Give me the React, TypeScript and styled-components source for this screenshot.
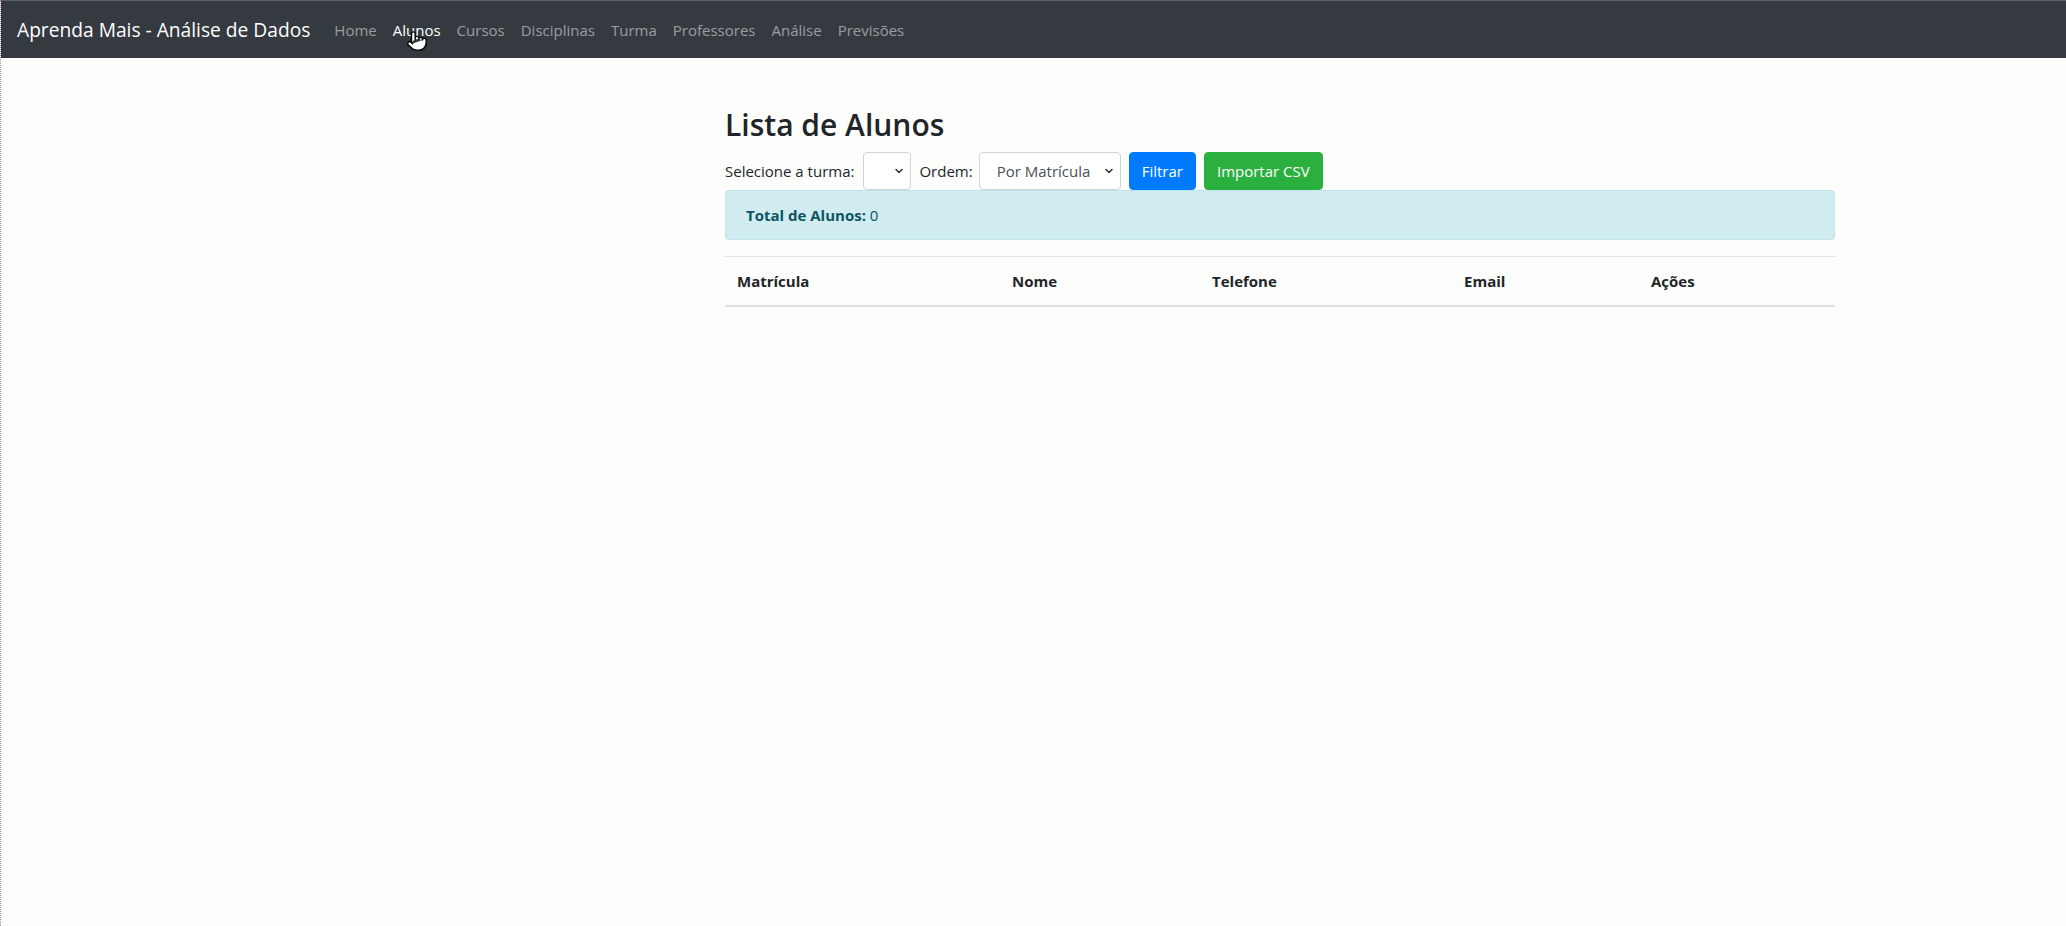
import React from "react";
import styled, { createGlobalStyle } from "styled-components";
import { ChevronDown, Pointer } from "lucide-react";

const GlobalStyle = createGlobalStyle`
  html, body {
    margin: 0;
    padding: 0;
    background: #fdfdfc;
    font-family: "Open Sans", "Noto Sans", sans-serif;
    color: #212529;
  }
  * { box-sizing: border-box; }
`;

const Page = styled.div`
  min-height: 926px;
  background: #fdfdfc;
  border-left: 1px dotted #b98a8a;
`;

const NavBar = styled.nav`
  position: relative;
  display: flex;
  align-items: center;
  height: 58px;
  padding: 0 16px;
  background: #343a40;
  border-top: 1px solid #5b6066;
`;

const Brand = styled.a`
  font-size: 19.2px;
  line-height: 30px;
  color: #fff;
  margin-right: 16px;
  white-space: nowrap;
  text-decoration: none;
`;

const NavList = styled.ul`
  display: flex;
  list-style: none;
  margin: 0;
  padding: 0;
`;

const NavLink = styled.a<{ $active?: boolean }>`
  display: block;
  padding: 8px 8px;
  font-size: 15px;
  line-height: 24px;
  color: ${(p) => (p.$active ? "#ffffff" : "rgba(255,255,255,0.5)")};
  text-decoration: none;
`;

const Cursor = styled.span`
  position: absolute;
  left: 405px;
  top: 29px;
  display: flex;
  pointer-events: none;
`;

const Container = styled.main`
  width: 1140px;
  margin: 48px 0 0 709px;
  padding: 0 15px;
`;

const Title = styled.h2`
  margin: 0 0 8px;
  font-size: 30px;
  font-weight: 600;
  line-height: 38px;
  color: #212529;
`;

const FilterRow = styled.form`
  display: flex;
  align-items: center;
  height: 38px;
`;

const Label = styled.label<{ $gap: number }>`
  font-size: 15px;
  line-height: 24px;
  margin-right: ${(p) => p.$gap}px;
  color: #212529;
`;

const SelectWrap = styled.div<{ $w: number }>`
  position: relative;
  width: ${(p) => p.$w}px;
  height: 38px;
  margin-right: 8px;
`;

const Select = styled.select`
  appearance: none;
  width: 100%;
  height: 100%;
  padding: 0 24px 0 17px;
  font-family: inherit;
  font-size: 15px;
  color: #495057;
  background: #fff;
  border: 1px solid #ced4da;
  border-radius: 4px;
`;

const Chevron = styled.span`
  position: absolute;
  right: 6px;
  top: 13px;
  display: flex;
  color: #333;
  pointer-events: none;
`;

const Button = styled.button<{ $bg: string }>`
  height: 38px;
  padding: 0 12px;
  margin-right: 8px;
  font-family: inherit;
  font-size: 15px;
  color: #fff;
  background: ${(p) => p.$bg};
  border: 1px solid ${(p) => p.$bg};
  border-radius: 4px;
`;

const Alert = styled.div`
  padding: 12px 20px;
  margin-bottom: 16px;
  font-size: 15px;
  line-height: 24px;
  color: #0c5460;
  background: #d1ecf1;
  border: 1px solid #bee5eb;
  border-radius: 4px;
`;

const Table = styled.table`
  width: 100%;
  table-layout: fixed;
  border-collapse: collapse;
  color: #212529;
`;

const HeadCell = styled.th<{ $w: number }>`
  width: ${(p) => p.$w}px;
  padding: 12px;
  text-align: left;
  font-size: 15px;
  font-weight: 700;
  line-height: 24px;
  border-top: 1px solid #dee2e6;
  border-bottom: 2px solid #dee2e6;
`;

const links = ["Home", "Alunos", "Cursos", "Disciplinas", "Turma", "Professores", "Análise", "Previsões"];
const cols: [string, number][] = [
  ["Matrícula", 275],
  ["Nome", 200],
  ["Telefone", 252],
  ["Email", 187],
  ["Ações", 196],
];

export default function App() {
  return (
    <Page>
      <GlobalStyle />
      <NavBar>
        <Brand href="#">Aprenda Mais - Análise de Dados</Brand>
        <NavList>
          {links.map((l) => (
            <li key={l}>
              <NavLink href="#" $active={l === "Alunos"}>
                {l}
              </NavLink>
            </li>
          ))}
        </NavList>
        <Cursor>
          <Pointer size={22} fill="#fff" color="#000" strokeWidth={1.5} />
        </Cursor>
      </NavBar>
      <Container>
        <Title>Lista de Alunos</Title>
        <FilterRow>
          <Label $gap={9}>Selecione a turma:</Label>
          <SelectWrap $w={48}>
            <Select defaultValue="">
              <option value=""></option>
            </Select>
            <Chevron>
              <ChevronDown size={12} strokeWidth={3} />
            </Chevron>
          </SelectWrap>
          <Label $gap={6}>Ordem:</Label>
          <SelectWrap $w={142}>
            <Select defaultValue="matricula">
              <option value="matricula">Por Matrícula</option>
              <option value="nome">Por Nome</option>
            </Select>
            <Chevron>
              <ChevronDown size={12} strokeWidth={3} />
            </Chevron>
          </SelectWrap>
          <Button type="button" $bg="#007bff">Filtrar</Button>
          <Button type="button" $bg="#2bb03f">Importar CSV</Button>
        </FilterRow>
        <Alert>
          <strong>Total de Alunos:</strong> 0
        </Alert>
        <Table>
          <thead>
            <tr>
              {cols.map(([c, w]) => (
                <HeadCell key={c} $w={w}>
                  {c}
                </HeadCell>
              ))}
            </tr>
          </thead>
          <tbody></tbody>
        </Table>
      </Container>
    </Page>
  );
}
